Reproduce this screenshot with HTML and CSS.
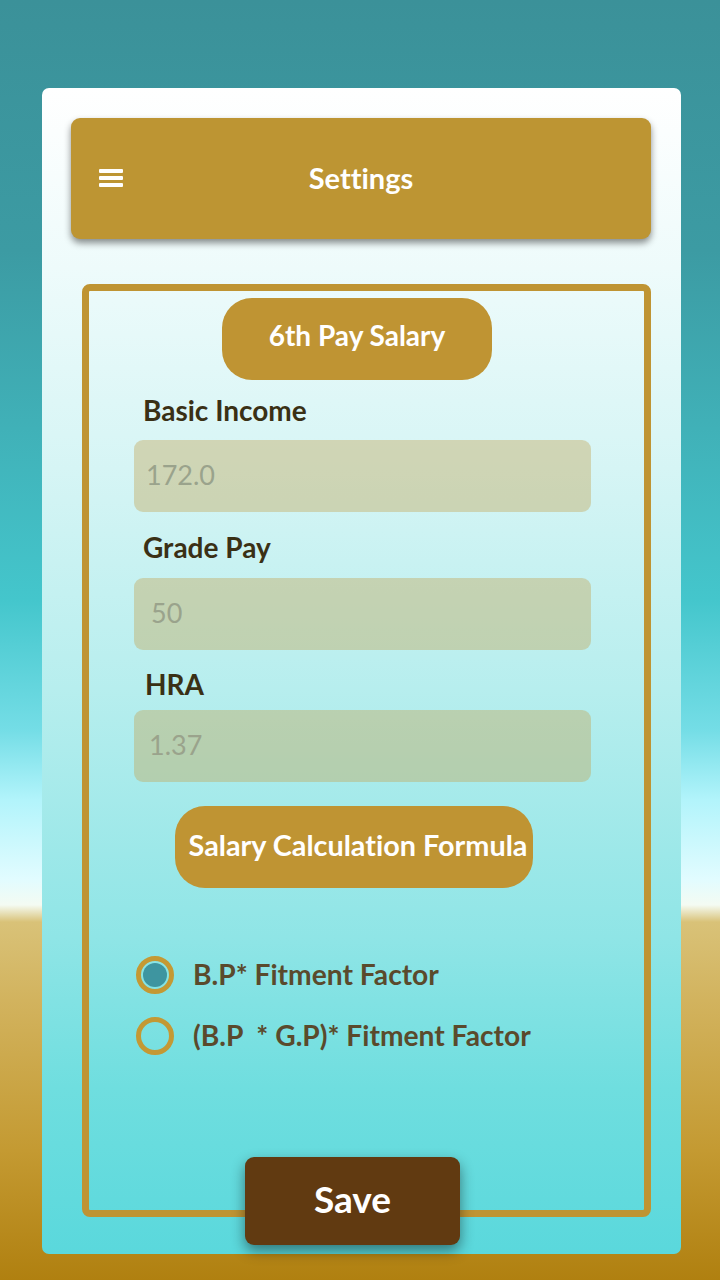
FILE: index.html
```html
<!DOCTYPE html>
<html>
<head>
<meta charset="utf-8">
<link rel="stylesheet" href="styles.css">
</head>
<body>
<div class="card">
  <div class="header">
    <div class="menu"><span></span><span></span><span></span></div>
    <div class="title">Settings</div>
    <div></div>
  </div>
  <div class="box">
    <div class="pill pill-top">6th Pay Salary</div>
    <div class="label l1">Basic Income</div>
    <div class="input i1"><span class="val v1">172.0</span></div>
    <div class="label l2">Grade Pay</div>
    <div class="input i2"><span class="val v2">50</span></div>
    <div class="label l3">HRA</div>
    <div class="input i3"><span class="val v3">1.37</span></div>
    <div class="pill pill-formula">Salary Calculation Formula</div>
    <div class="radio r1"><span class="dot checked"></span><span class="rtext">B.P* Fitment Factor</span></div>
    <div class="radio r2"><span class="dot"></span><span class="rtext">(B.P&nbsp; * G.P)* Fitment Factor</span></div>
  </div>
  <div class="save">Save</div>
</div>
</body>
</html>
```
FILE: styles.css
```css
html, body {
  margin: 0;
  padding: 0;
}
body {
  width: 720px;
  height: 1280px;
  overflow: hidden;
  font-family: Lato, "Open Sans", sans-serif;
  font-variant-ligatures: none;
  background: linear-gradient(to bottom,
    #3b9199 0px,
    #3c9ba3 250px,
    #44c6cc 600px,
    #74dde6 730px,
    #b2f4fb 800px,
    #e2fcff 880px,
    #f4fbf2 905px,
    #d9c278 922px,
    #d2b35e 1000px,
    #c49a32 1150px,
    #b08010 1280px);
}
.card {
  margin: 88px 0 0 42px;
  width: 639px;
  height: 1166px;
  box-sizing: border-box;
  padding: 30px 30px 0 29px;
  border-radius: 7px;
  background: linear-gradient(to bottom,
    #ffffff 0px,
    #eefbfb 180px,
    #d6f5f5 380px,
    #b7eeee 600px,
    #8fe5e6 850px,
    #6fdedf 1000px,
    #5ad8dc 1166px);
  display: flex;
  flex-direction: column;
}
.header {
  height: 121px;
  border-radius: 9px;
  background: #bd9533;
  box-shadow: 0 4px 7px rgba(0, 0, 0, 0.45);
  display: grid;
  grid-template-columns: 1fr auto 1fr;
  align-items: center;
}
.menu {
  padding-left: 28px;
  display: flex;
  flex-direction: column;
  gap: 3px;
  margin-top: -2px;
}
.menu span {
  display: block;
  width: 24px;
  height: 4px;
  border-radius: 1px;
  background: #ffffff;
}
.title {
  color: #ffffff;
  font-size: 29px;
  font-weight: 700;
  margin-top: -2px;
}
.box {
  margin-top: 45px;
  margin-left: 11px;
  width: 569px;
  height: 933px;
  box-sizing: border-box;
  border: 7px solid #bf9433;
  border-radius: 8px;
  display: flex;
  flex-direction: column;
  align-items: flex-start;
}
.pill {
  background: #bf9433;
  color: #ffffff;
  font-weight: 700;
  font-size: 28px;
  display: flex;
  align-items: center;
  justify-content: center;
  border-radius: 30px;
  height: 82px;
  box-sizing: border-box;
  padding-bottom: 8px;
}
.pill-top {
  margin-top: 7px;
  margin-left: 133px;
  width: 270px;
}
.pill-formula {
  margin-top: 24px;
  margin-left: 86px;
  width: 358px;
  font-size: 28.8px;
  padding-bottom: 4px;
  padding-left: 8px;
}
.label {
  color: #3a3015;
  font-size: 28px;
  font-weight: 700;
  line-height: 30px;
  height: 30px;
}
.l1 { margin-top: 15px; margin-left: 54px; }
.l2 { margin-top: 20px; margin-left: 54px; }
.l3 { margin-top: 19px; margin-left: 56px; }
.input {
  margin-left: 45px;
  width: 457px;
  height: 72px;
  border-radius: 9px;
  background: rgba(195, 166, 86, 0.4);
  display: flex;
  align-items: center;
}
.i1 { margin-top: 15px; }
.i2 { margin-top: 16px; }
.i3 { margin-top: 11px; }
.val {
  color: #9aa38c;
  font-size: 27px;
  font-weight: 400;
  margin-top: -4px;
}
.v1 { padding-left: 12px; }
.v2 { padding-left: 17px; }
.v3 { padding-left: 15px; }
.radio {
  margin-left: 47px;
  height: 40px;
  display: flex;
  align-items: center;
}
.r1 { margin-top: 67px; }
.r2 { margin-top: 21px; }
.dot {
  width: 38px;
  height: 38px;
  box-sizing: border-box;
  border: 5px solid #c49934;
  border-radius: 50%;
  padding: 2px;
  background-clip: content-box;
  flex: none;
}
.dot.checked {
  background-color: #3e95a0;
}
.rtext {
  margin-left: 19px;
  color: #5a4a2c;
  font-size: 28.2px;
  font-weight: 700;
  margin-top: -3px;
}
.save {
  margin-top: -60px;
  margin-left: 174px;
  width: 215px;
  height: 88px;
  box-sizing: border-box;
  padding-bottom: 5px;
  border-radius: 9px;
  background: #613a11;
  color: #ffffff;
  font-size: 37px;
  font-weight: 700;
  display: flex;
  align-items: center;
  justify-content: center;
  box-shadow: 0 6px 14px rgba(0, 0, 0, 0.45);
}
```
